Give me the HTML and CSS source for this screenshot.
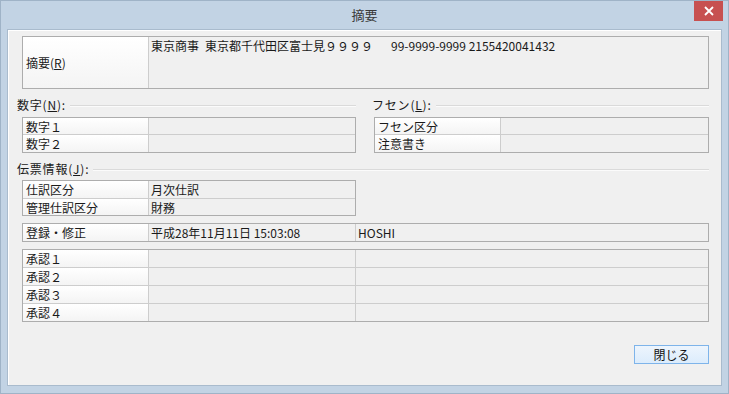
FILE: index.html
```html
<!DOCTYPE html>
<html lang="ja">
<head>
<meta charset="utf-8">
<title>摘要</title>
<link rel="stylesheet" href="styles.css">
</head>
<body>
<div class="window">
  <div class="titlebar">
    <div class="spacer"></div>
    <div class="title">摘要</div>
    <div class="close-wrap">
      <div class="close"><svg width="10" height="10" viewBox="0 0 10 10"><path d="M1 1 L9 9 M9 1 L1 9" stroke="#fff" stroke-width="1.8" fill="none"/></svg></div>
    </div>
  </div>
  <div class="client">
    <div class="grid g2 summary">
      <div class="cell lbl mid">摘要(<u>R</u>)</div>
      <div class="cell val topv">東京商事&ensp;東京都千代田区富士見９９９９&ensp;&ensp;&ensp;<span class="num">99-9999-9999 2155420041432</span></div>
    </div>

    <div class="cols">
      <div class="col left">
        <div class="hdr"><span>数字(<u>N</u>):</span><i class="rule"></i></div>
        <div class="grid g2 rowsA">
          <div class="cell lbl">数字１</div><div class="cell val"></div>
          <div class="cell lbl">数字２</div><div class="cell val"></div>
        </div>
      </div>
      <div class="col right">
        <div class="hdr"><span>フセン(<u>L</u>):</span><i class="rule"></i></div>
        <div class="grid g2 rowsA">
          <div class="cell lbl">フセン区分</div><div class="cell val"></div>
          <div class="cell lbl">注意書き</div><div class="cell val"></div>
        </div>
      </div>
    </div>

    <div class="hdr hdr-den"><span>伝票情報(<u>J</u>):</span><i class="rule"></i></div>
    <div class="halfwrap">
      <div class="grid g2 rowsB">
        <div class="cell lbl">仕訳区分</div><div class="cell val">月次仕訳</div>
        <div class="cell lbl">管理仕訳区分</div><div class="cell val">財務</div>
      </div>
    </div>

    <div class="grid g3 touroku">
      <div class="cell lbl">登録・修正</div>
      <div class="cell val">平成28年11月11日 15:03:08</div>
      <div class="cell val">HOSHI</div>
    </div>

    <div class="grid g3 shounin">
      <div class="cell lbl">承認１</div><div class="cell val"></div><div class="cell val"></div>
      <div class="cell lbl">承認２</div><div class="cell val"></div><div class="cell val"></div>
      <div class="cell lbl">承認３</div><div class="cell val"></div><div class="cell val"></div>
      <div class="cell lbl">承認４</div><div class="cell val"></div><div class="cell val"></div>
    </div>

    <div class="footer">
      <button class="btn">閉じる</button>
    </div>
  </div>
</div>
</body>
</html>
```

FILE: styles.css
```css
* { box-sizing: border-box; }
html, body { margin: 0; padding: 0; }
body {
  width: 729px;
  height: 394px;
  overflow: hidden;
  font-family: "Noto Sans CJK JP", "Noto Sans", sans-serif;
  font-size: 12px;
  color: #1a1a1a;
}
.window {
  width: 729px;
  height: 394px;
  background: #c2d3e4;
  border: 1px solid #9fb3c7;
  padding: 0 6px 7px 6px;
  display: flex;
  flex-direction: column;
}
.titlebar {
  height: 28px;
  display: grid;
  grid-template-columns: 1fr auto 1fr;
  align-items: start;
}
.title {
  font-size: 13px;
  line-height: 28px;
  color: #3a3a3a;
}
.close-wrap {
  display: flex;
  justify-content: flex-end;
  margin-right: -1px;
}
.close {
  width: 29px;
  height: 20px;
  background: #c75050;
  display: flex;
  align-items: center;
  justify-content: center;
}
.client {
  flex: 1;
  background: #f0f0f0;
  border: 1px solid #a9bbcd;
  box-shadow: inset 1px 1px 0 #ffffff;
  padding: 6px 12px 0 9px;
  display: flex;
  flex-direction: column;
}
.grid {
  display: grid;
  gap: 1px;
  background: #cdcdcd;
  border: 1px solid #adadad;
  margin-left: 5px;
}
.g2 { grid-template-columns: 125px 1fr; }
.g3 { grid-template-columns: 125px 206px 1fr; }
.cell {
  line-height: 17px;
  white-space: nowrap;
  overflow: hidden;
}
.lbl {
  background: linear-gradient(#ffffff, #f4f4f4);
  padding-left: 3px;
}
.val {
  background: #f0f0f0;
  padding-left: 2px;
}
.summary { grid-template-rows: 51px; }
.mid { display: flex; align-items: center; }
.topv { line-height: 15px; padding-top: 1px; }
.num { letter-spacing: 0; }

.cols {
  display: flex;
  gap: 16px;
  margin-top: 9px;
}
.col.left { width: 339px; }
.col.right { flex: 1; }
.col.right .grid { margin-left: 2px; }
.hdr {
  display: flex;
  align-items: center;
  line-height: 14px;
  height: 14px;
  margin-bottom: 5px;
}
.hdr span { white-space: nowrap; letter-spacing: 0.8px; }
.rule {
  flex: 1;
  margin-left: 4px;
  height: 2px;
  border-top: 1px solid #dadada;
  border-bottom: 1px solid #fbfbfb;
  margin-top: 1px;
}
.rowsA { grid-template-rows: 16px 17px; }
.hdr-den { margin-top: 9px; margin-bottom: 4px; }
.halfwrap { width: 339px; }
.rowsB { grid-template-rows: 17px 16px; }
.touroku { margin-top: 7px; grid-template-rows: 17px; }
.shounin { margin-top: 7px; grid-template-rows: repeat(4, 17px); }
.footer {
  display: flex;
  justify-content: flex-end;
  margin-top: 23px;
}
.btn {
  width: 75px;
  height: 19px;
  padding: 0;
  font-family: inherit;
  font-size: 12px;
  line-height: 17px;
  color: #111;
  border: 1px solid #7eb4ea;
  background: linear-gradient(#edf5fd, #dcecfc);
  border-radius: 0;
}
u { text-decoration: underline; text-underline-offset: 1px; }
```
